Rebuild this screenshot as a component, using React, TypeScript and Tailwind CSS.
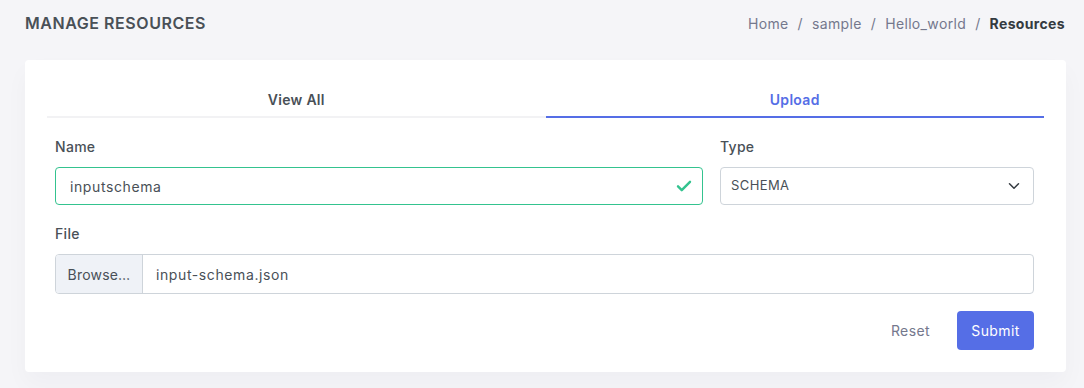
import React, { useState } from "react";

const font = { fontFamily: 'Inter, "Open Sans", "Liberation Sans", sans-serif' };

const App: React.FC = () => {
    const [tab, setTab] = useState<"view" | "upload">("upload");

    return (
        <div className="min-h-[388px] bg-[#f5f5f8] pl-[25px] pr-[18px] pt-[12px] pb-[16px] text-[13px] text-[#495057]" style={font}>
            <div className="flex h-[22px] items-center justify-between pr-[1px]">
                <h4 className="text-[16px] font-semibold tracking-[0.55px] text-[#495057]">MANAGE RESOURCES</h4>
                <div className="flex items-center text-[14px] tracking-[0.35px] text-[#74788d]">
                    <span>Home</span>
                    <span className="px-[9px]">/</span>
                    <span>sample</span>
                    <span className="px-[9px]">/</span>
                    <span>Hello_world</span>
                    <span className="px-[9px]">/</span>
                    <span className="font-bold text-[#343a40]">Resources</span>
                </div>
            </div>

            <div className="mt-[26px] rounded-[4px] bg-white px-[22px] pt-[22px] pb-[22px] shadow-[0_0.75rem_1.5rem_rgba(18,38,63,0.03)]">
                <div className="flex border-b-2 border-[#f2f2f4]">
                    <button
                        onClick={() => setTab("view")}
                        className={`-mb-[2px] h-[36px] flex-1 border-b-2 text-[14px] font-semibold tracking-[0.3px] ${
                            tab === "view" ? "border-[#556ee6] text-[#556ee6]" : "border-transparent text-[#495057]"
                        }`}
                    >
                        View All
                    </button>
                    <button
                        onClick={() => setTab("upload")}
                        className={`-mb-[2px] h-[36px] flex-1 border-b-2 text-[14px] font-semibold tracking-[0.3px] ${
                            tab === "upload" ? "border-[#556ee6] text-[#556ee6]" : "border-transparent text-[#495057]"
                        }`}
                    >
                        Upload
                    </button>
                </div>

                <form className="pl-[8px] pr-[10px] pt-[19px]">
                    <div className="grid grid-cols-[648px_1fr] gap-x-[17px]">
                        <div>
                            <label className="block text-[14px] font-medium leading-[20px] tracking-[0.3px]">Name</label>
                            <div className="relative mt-[10px]">
                                <input
                                    defaultValue="inputschema"
                                    className="h-[38px] w-full rounded-[4px] border border-[#34c38f] px-[14px] text-[14px] tracking-[0.6px] text-[#495057] outline-none"
                                />
                                <svg
                                    className="absolute right-[10px] top-[10px]"
                                    width="18"
                                    height="18"
                                    viewBox="0 0 24 24"
                                    fill="none"
                                    stroke="#34c38f"
                                    strokeWidth="3.2"
                                    strokeLinecap="round"
                                    strokeLinejoin="round"
                                >
                                    <path d="M4 12.5l5 5L20 6.5" />
                                </svg>
                            </div>
                        </div>
                        <div>
                            <label className="block text-[14px] font-medium leading-[20px] tracking-[0.3px]">Type</label>
                            <div className="relative mt-[10px]">
                                <select
                                    defaultValue="SCHEMA"
                                    className="h-[38px] w-full appearance-none rounded-[4px] border border-[#ced4da] bg-white px-[10px] text-[13px] tracking-[0.4px] text-[#495057] outline-none"
                                >
                                    <option>SCHEMA</option>
                                    <option>DATA</option>
                                </select>
                                <svg
                                    className="pointer-events-none absolute right-[14px] top-[13px]"
                                    width="12"
                                    height="12"
                                    viewBox="0 0 16 16"
                                    fill="none"
                                    stroke="#343a40"
                                    strokeWidth="2"
                                    strokeLinecap="round"
                                    strokeLinejoin="round"
                                >
                                    <path d="M2 5l6 6 6-6" />
                                </svg>
                            </div>
                        </div>
                    </div>

                    <label className="mt-[19px] block text-[14px] font-medium leading-[20px] tracking-[0.3px]">File</label>
                    <div className="mt-[10px] flex h-[40px] overflow-hidden rounded-[4px] border border-[#ced4da] tracking-[0.6px]">
                        <span className="flex w-[87px] items-center justify-center border-r border-[#ced4da] bg-[#eff2f7] text-[14px] tracking-[0.2px] text-[#495057]">
                            Browse…
                        </span>
                        <span className="flex items-center px-[13px] text-[14px] text-[#495057]">input-schema.json</span>
                    </div>

                    <div className="mt-[17px] flex items-center justify-end gap-[14px] tracking-[0.4px]">
                        <button type="reset" className="h-[39px] px-[13px] text-[14px] text-[#74788d]">
                            Reset
                        </button>
                        <button type="button" className="h-[39px] w-[77px] rounded-[4px] bg-[#556ee6] text-[14px] text-white">
                            Submit
                        </button>
                    </div>
                </form>
            </div>
        </div>
    );
};

export default App;
